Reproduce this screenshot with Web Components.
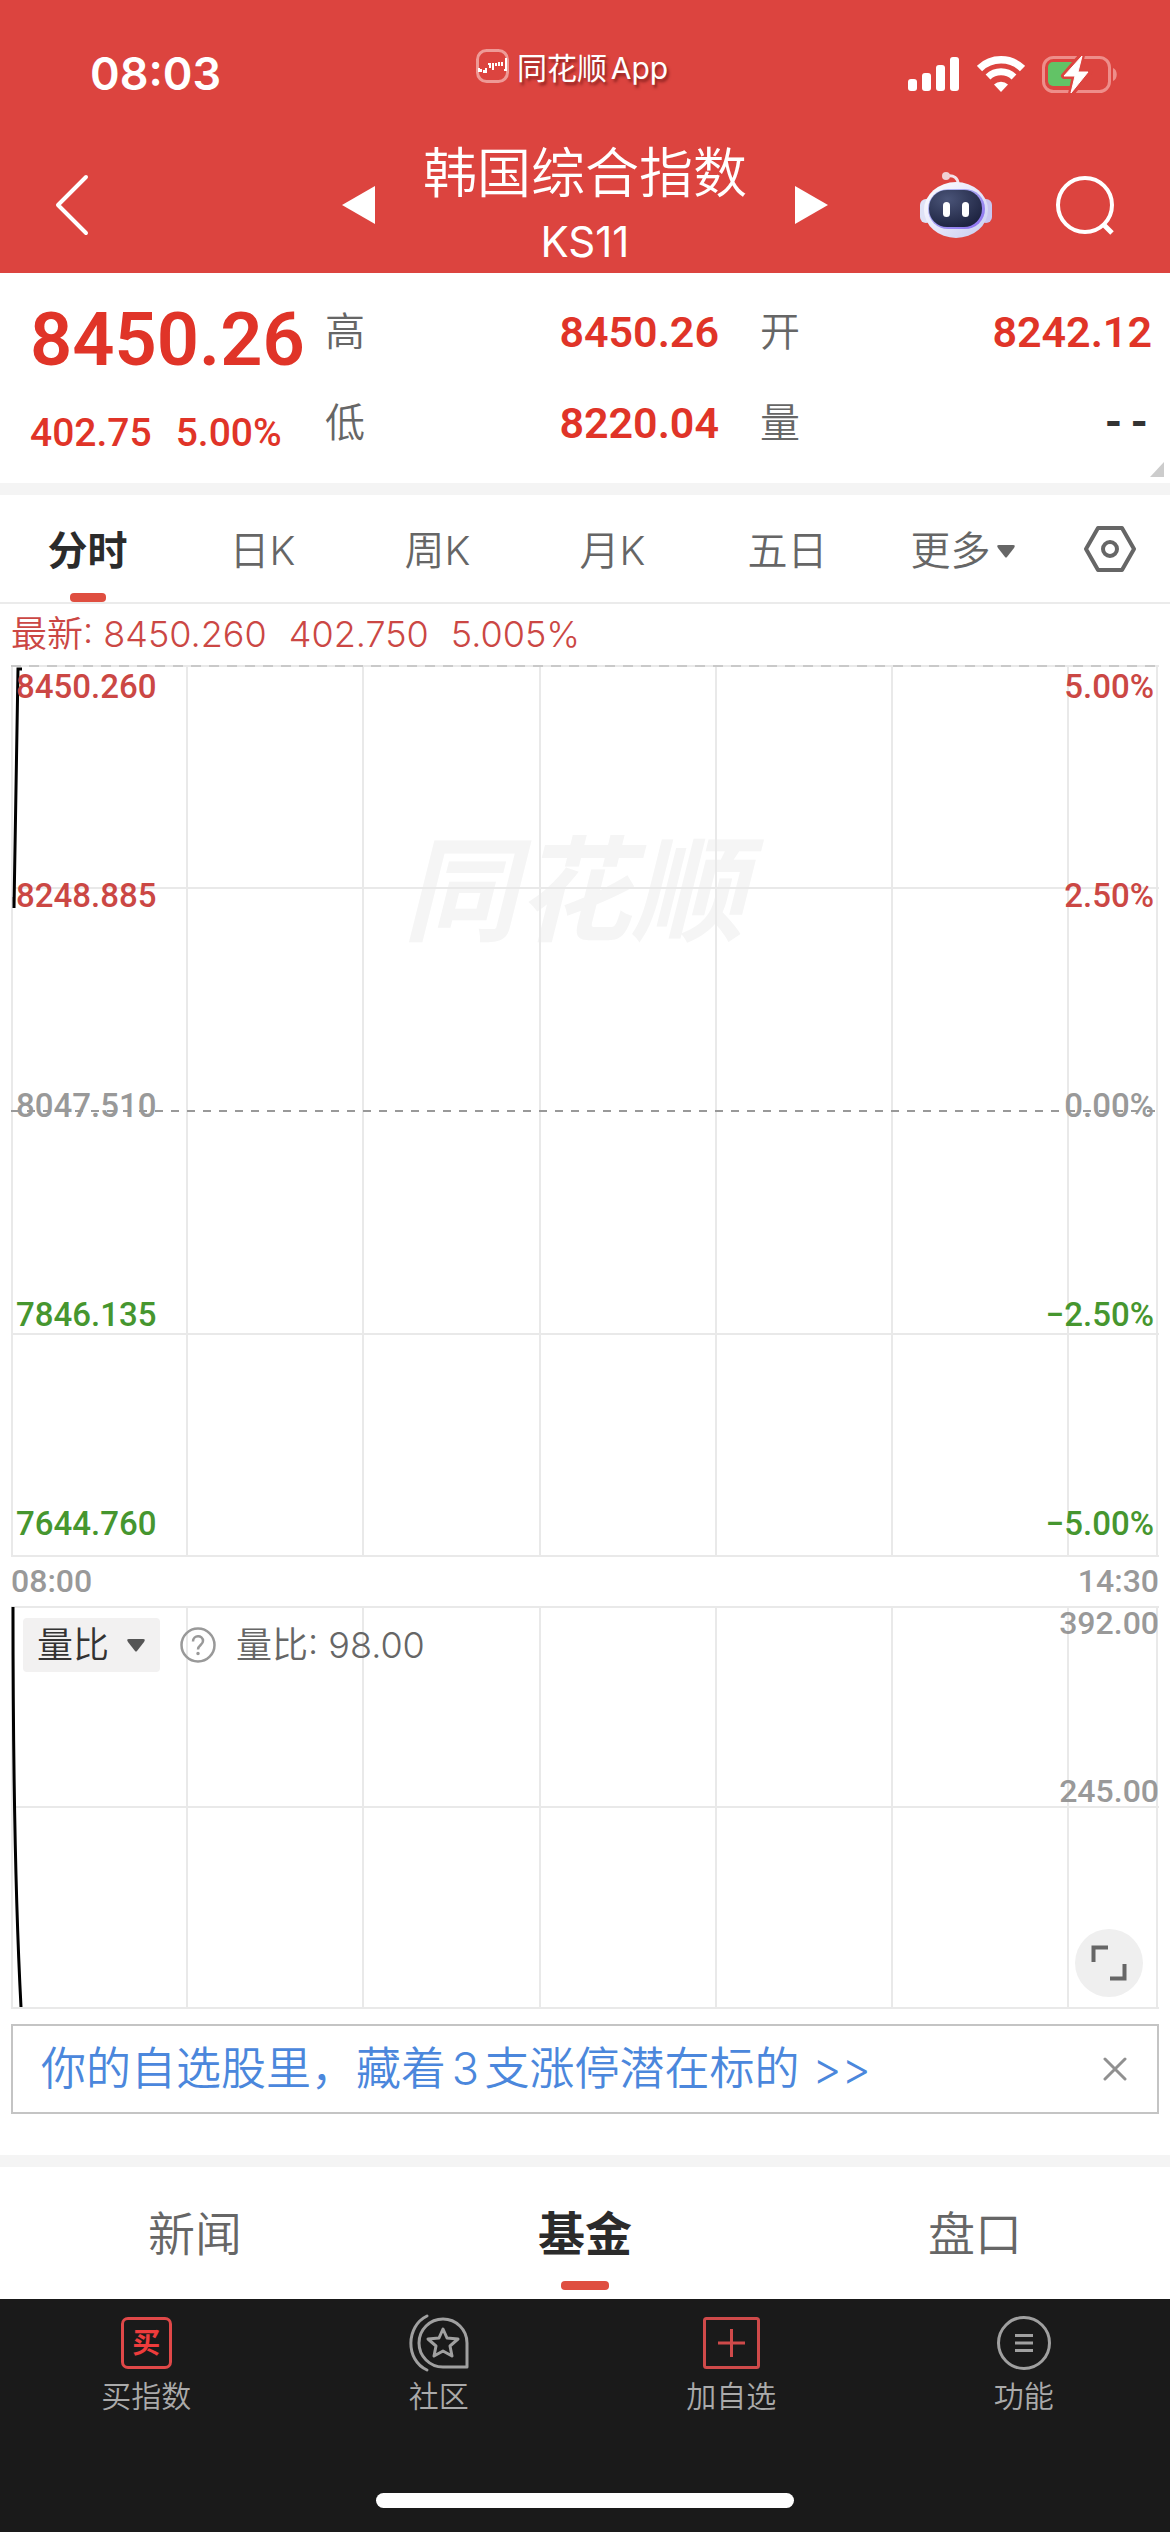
<!DOCTYPE html>
<html lang="zh-CN">
<head>
<meta charset="utf-8">
<meta name="viewport" content="width=device-width, initial-scale=1">
<title>韩国综合指数 KS11</title>
<style>
  html, body { margin: 0; }
  body {
    background: #fff;
    font-family: Inter, "Noto Sans CJK SC", sans-serif;
    color: #666;
    --num: Roboto, "Noto Sans CJK SC", sans-serif;
    --brand: #dc443f;
    --up: #e03428;
    --up-soft: #cb4744;
    --down: #46962f;
    --muted: #999;
    --accent: #df4e40;
    --grid: #e9e9e9;
  }
</style>
</head>
<body>
<quote-app></quote-app>

<script>
const base = `<style>
  *, *::before, *::after { box-sizing: border-box; }
  button, select { font: inherit; color: inherit; background: none; border: 0; padding: 0; margin: 0; cursor: pointer; }
  svg { display: block; flex: none; }
</style>`;

function define(name, html) {
  const template = document.createElement('template');
  template.innerHTML = base + html;
  customElements.define(name, class extends HTMLElement {
    constructor() {
      super();
      this.attachShadow({ mode: 'open' }).append(template.content.cloneNode(true));
    }
  });
}

/* ---------- phone status bar ---------- */
define('status-bar', `<style>
  :host { display: grid; grid-template-columns: 386px 1fr auto; height: 110px; padding: 38px 52px 0 90px; color: #fff; }
  .clock { font-size: 45px; line-height: 72px; font-weight: 600; }
  .app { display: flex; align-items: center; gap: 8px; height: 56px; font-size: 30px; text-shadow: 2px 3px 3px rgba(60,0,0,.5); text-autospace: normal; }
  .icons { display: flex; align-items: center; gap: 17px; height: 72px; }
</style>
<div class="clock">08:03</div>
<div class="app">
  <svg width="33" height="34" viewBox="0 0 33 34" fill="none">
    <rect x="1.500" y="1.500" width="30" height="31" rx="9" stroke="#ee9a96" stroke-width="3"/>
    <path d="M3 19v4M5 20v3M8 21v2h2v-4M12 15h2v4M17 14v7M20 14v3M23 17v-4M26 13v4M30 9v12h-2" stroke="#fff" stroke-width="2"/>
  </svg>
  <span>同花顺App</span>
</div>
<div class="icons">
  <svg width="52" height="36" viewBox="0 0 52 36" fill="#fff">
    <rect x="0" y="23" width="9" height="12" rx="3"/><rect x="14" y="17" width="9" height="18" rx="3"/>
    <rect x="28" y="9" width="9" height="26" rx="3"/><rect x="42" y="1" width="9" height="34" rx="3"/>
  </svg>
  <svg width="48" height="36" viewBox="0 0 48 36" fill="none" stroke="#fff">
    <path d="M2.500 12.500a31 31 0 0 1 43 0" stroke-width="7.500"/>
    <path d="M11 21a19 19 0 0 1 26 0" stroke-width="7"/>
    <path d="M24 36l-7-7.500a10 10 0 0 1 14 0z" fill="#fff" stroke="none"/>
  </svg>
  <svg width="76" height="42" viewBox="0 0 76 42" fill="none">
    <rect x="1.500" y="4.500" width="66" height="34" rx="10" stroke="#ee8e8a" stroke-width="3"/>
    <path d="M71 15c5 2 5 11 0 13z" fill="#ee8e8a"/>
    <path d="M11 9h20v24H11a5 5 0 0 1-5-5V14a5 5 0 0 1 5-5z" fill="#62c366"/>
    <path d="M40 2L22 23h11l-4 18 18-22H36z" fill="#fff" stroke="#dc443f" stroke-width="6" stroke-linejoin="round"/>
    <path d="M40 3L22 23h11l-4 17 17-21H36z" fill="#fff" stroke="#fff" stroke-width="1" stroke-linejoin="round"/>
  </svg>
</div>`);

/* ---------- title bar ---------- */
define('title-bar', `<style>
  :host { display: grid; grid-template-columns: 1fr auto 1fr; align-items: center; padding: 27px 55px 0; color: #fff; }
  .pager { display: flex; align-items: center; gap: 48px; }
  .tools { display: flex; align-items: center; justify-content: flex-end; gap: 62px; }
  .name { text-align: center; }
  h1 { margin: 0; font-size: 54px; line-height: 74px; font-weight: 350; }
  p { margin: 0; font-size: 42px; line-height: 62px; }
</style>
<button aria-label="返回"><svg width="34" height="62" viewBox="0 0 34 62" fill="none" stroke="#fff" stroke-width="4" stroke-linecap="round" stroke-linejoin="round"><path d="M31 3L3 31l28 28"/></svg></button>
<div class="pager">
  <button aria-label="上一个"><svg width="33" height="38" viewBox="0 0 33 38" fill="#fff"><path d="M33 0v38L0 19z"/></svg></button>
  <div class="name"><h1>韩国综合指数</h1><p>KS11</p></div>
  <button aria-label="下一个"><svg width="33" height="38" viewBox="0 0 33 38" fill="#fff"><path d="M0 0v38l33-19z"/></svg></button>
</div>
<div class="tools">
  <button aria-label="智能助手">
    <svg width="72" height="68" viewBox="0 0 72 68">
      <defs>
        <linearGradient id="shell" x1="0" y1="0" x2="1" y2="1"><stop offset="0" stop-color="#fff"/><stop offset=".55" stop-color="#e4e4fa"/><stop offset="1" stop-color="#c5cbee"/></linearGradient>
        <linearGradient id="rim" x1="0" y1="0" x2="1" y2="1"><stop offset="0" stop-color="#b9c6f2"/><stop offset="1" stop-color="#8a6cf0"/></linearGradient>
        <radialGradient id="face" cx=".35" cy=".25" r=".8"><stop offset="0" stop-color="#4a5478"/><stop offset="1" stop-color="#1d2340"/></radialGradient>
      </defs>
      <path d="M27 5c7-1 11 2 11 8" fill="none" stroke="#f3e3ea" stroke-width="3"/>
      <circle cx="26" cy="5" r="4" fill="#f0cfd4"/>
      <rect x="0" y="28" width="12" height="24" rx="6" fill="#dfe2f6"/><rect x="60" y="28" width="12" height="24" rx="6" fill="#c9c6f0"/>
      <ellipse cx="36" cy="39" rx="32" ry="28" fill="url(#shell)"/>
      <rect x="8" y="18" width="57" height="40" rx="20" fill="url(#rim)"/>
      <rect x="9" y="19" width="53" height="37" rx="18" fill="url(#face)"/>
      <rect x="23" y="31" width="7" height="15" rx="3.500" fill="#fff"/><rect x="42" y="31" width="7" height="15" rx="3.500" fill="#fff"/>
    </svg>
  </button>
  <button aria-label="搜索"><svg width="61" height="62" viewBox="0 0 61 62" fill="none" stroke="#fff" stroke-width="4"><circle cx="31" cy="31" r="27"/><path d="M49 50l9 9" stroke-width="5"/></svg></button>
</div>`);

/* ---------- price summary ---------- */
define('price-summary', `<style>
  :host { display: grid; grid-template-columns: 295px 394fr 433fr; padding: 14px 18px 14px 30px; height: 210px; font-family: var(--num); color: var(--up); position: relative; }
  .last { font-size: 74px; line-height: 106px; font-weight: 600; }
  .change { display: flex; gap: 24px; font-size: 39px; line-height: 80px; font-weight: 500; }
  dl { margin: 0; }
  dl + dl { padding-left: 41px; }
  dl div { display: flex; justify-content: space-between; line-height: 91px; }
  dt { font-size: 40px; font-weight: 350; color: #666; }
  dd { margin: 0; font-size: 43px; font-weight: 600; }
  .none { font-family: "Liberation Mono", monospace; font-weight: 700; color: #333; }
  .more { position: absolute; right: 6px; bottom: 6px; }
</style>
<div><div class="last">8450.26</div><div class="change"><span>402.75</span><span>5.00%</span></div></div>
<dl><div><dt>高</dt><dd>8450.26</dd></div><div><dt>低</dt><dd>8220.04</dd></div></dl>
<dl><div><dt>开</dt><dd>8242.12</dd></div><div><dt>量</dt><dd class="none">--</dd></div></dl>
<svg class="more" width="14" height="15" viewBox="0 0 14 15" fill="#ccc"><path d="M14 0v15H0z"/></svg>`);

/* ---------- one tab: <tab-item current> ---------- */
define('tab-item', `<style>
  :host { display: flex; flex: 1; }
  button { flex: 1; display: flex; flex-direction: column; align-items: center; font-weight: 350; color: #666; }
  .text { display: flex; align-items: center; gap: 6px; line-height: var(--tab-line); padding-top: var(--tab-top); white-space: nowrap; }
  .mark { width: var(--mark); height: 9px; border-radius: 4px; margin-top: auto; margin-bottom: var(--mark-gap); }
  :host([current]) button { color: #2b2b2b; font-weight: 600; }
  :host([current]) .mark { background: var(--accent); }
</style>
<button role="tab"><span class="text"><slot></slot></span><span class="mark"></span></button>`);

define('period-tabs', `<style>
  :host { display: flex; height: 109px; border-bottom: 2px solid #ebebeb; font-size: 40px; --tab-line: 60px; --tab-top: 26px; --mark: 36px; --mark-gap: 0px; }
  .list { display: flex; flex: 1; }
  .set { width: 120px; display: flex; align-items: center; padding-left: 34px; }
</style>
<div class="list" role="tablist">
  <tab-item current>分时</tab-item><tab-item>日K</tab-item><tab-item>周K</tab-item><tab-item>月K</tab-item><tab-item>五日</tab-item>
  <tab-item>更多<svg width="18" height="13" viewBox="0 0 18 13" fill="#666"><path d="M2 0h14q3 0 1 3l-7 9q-1 1-2 0L1 3Q-1 0 2 0z"/></svg></tab-item>
</div>
<button class="set" aria-label="设置"><svg width="52" height="46" viewBox="0 0 52 46" fill="none" stroke="#666" stroke-width="4" stroke-linejoin="round"><path d="M14 2h24l12 21-12 21H14L2 23z"/><circle cx="26" cy="23" r="7"/></svg></button>`);

/* ---------- intraday chart ---------- */
define('price-chart', `<style>
  :host { display: block; padding: 0 11px; font-family: var(--num); font-size: 33px; font-weight: 500; }
  .latest { display: flex; gap: 22px; font-family: Inter, "Noto Sans CJK SC", sans-serif; font-size: 36px; font-weight: 350; line-height: 61px; color: var(--up-soft); }
  .plot { display: grid; height: 892px; }
  .plot > * { grid-area: 1 / 1; min-width: 0; min-height: 0; }
  .plot svg { width: 100%; height: 100%; }
  .grid line { stroke: var(--grid); stroke-width: 2; }
  .grid .dash { stroke: #999; stroke-dasharray: 8 8; }
  .grid .limit { stroke: #c9c9c9; stroke-dasharray: 10 8; }
  .logo { place-self: center; padding-bottom: 456px; padding-right: 22px; font: italic 700 114px/120px "Noto Sans CJK SC", sans-serif; color: #f5f5f5; height: 892px; display: flex; align-items: center; }
  .axes { display: flex; justify-content: space-between; padding: 0 5px 11px; }
  .axes div { display: flex; flex-direction: column; justify-content: space-between; line-height: 44px; }
  .axes div + div { text-align: right; }
  .up { color: var(--up-soft); } .flat { color: var(--muted); } .down { color: var(--down); }
  .time { display: flex; justify-content: space-between; font-size: 32px; line-height: 48px; height: 49px; color: var(--muted); }
</style>
<div class="latest"><span>最新: 8450.260</span><span>402.750</span><span>5.005%</span></div>
<div class="plot">
  <div class="logo">同花顺</div>
  <svg class="grid" viewBox="0 0 1148 892" preserveAspectRatio="none">
    <line x1="1" y1="0" x2="1" y2="892"/><line x1="176" y1="0" x2="176" y2="892"/><line x1="352" y1="0" x2="352" y2="892"/><line x1="529" y1="0" x2="529" y2="892"/>
    <line x1="705" y1="0" x2="705" y2="892"/><line x1="881" y1="0" x2="881" y2="892"/><line x1="1057" y1="0" x2="1057" y2="892"/><line x1="1146" y1="0" x2="1146" y2="892"/>
    <line x1="0" y1="223" x2="1148" y2="223"/><line x1="0" y1="669" x2="1148" y2="669"/><line x1="0" y1="891" x2="1148" y2="891"/>
    <line x1="0" y1="1" x2="1148" y2="1"/><line class="limit" x1="0" y1="1" x2="1148" y2="1"/><line class="dash" x1="0" y1="446" x2="1148" y2="446"/>
    <path d="M11 4H7L3 243V232" fill="none" stroke="#000" stroke-width="3"/>
  </svg>
  <div class="axes">
    <div><span class="up">8450.260</span><span class="up">8248.885</span><span class="flat">8047.510</span><span class="down">7846.135</span><span class="down">7644.760</span></div>
    <div><span class="up">5.00%</span><span class="up">2.50%</span><span class="flat">0.00%</span><span class="down">−2.50%</span><span class="down">−5.00%</span></div>
  </div>
</div>
<div class="time"><span>08:00</span><span>14:30</span></div>`);

/* ---------- volume-ratio chart ---------- */
define('ratio-chart', `<style>
  :host { display: grid; height: 403px; margin: 0 11px; }
  :host > * { grid-area: 1 / 1; min-width: 0; min-height: 0; }
  .grid { width: 100%; height: 100%; }
  .grid line { stroke: var(--grid); stroke-width: 2; }
  .axis { display: flex; flex-direction: column; justify-content: space-between; height: 202px; text-align: right; font: 500 32px/34px var(--num); color: var(--muted); }
  .head { display: flex; align-items: center; gap: 20px; height: 54px; margin: 12px 0 0 12px; font-size: 36px; line-height: 54px; font-weight: 350; justify-self: start; }
  .pick { display: grid; align-items: center; background: #f2f1f1; border-radius: 4px; color: #333; }
  .pick > * { grid-area: 1 / 1; }
  select { appearance: none; width: 137px; height: 54px; padding-left: 14px; }
  .pick svg { justify-self: end; margin-right: 15px; pointer-events: none; }
  .value { margin: 0; }
  .full { place-self: end; width: 68px; height: 68px; margin: 0 16px 12px 0; border-radius: 50%; background: #efefef; display: flex; align-items: center; justify-content: center; }
</style>
<svg class="grid" viewBox="0 0 1148 403" preserveAspectRatio="none">
  <line x1="1" y1="0" x2="1" y2="403"/><line x1="176" y1="0" x2="176" y2="403"/><line x1="352" y1="0" x2="352" y2="403"/><line x1="529" y1="0" x2="529" y2="403"/>
  <line x1="705" y1="0" x2="705" y2="403"/><line x1="881" y1="0" x2="881" y2="403"/><line x1="1057" y1="0" x2="1057" y2="403"/><line x1="1146" y1="0" x2="1146" y2="403"/>
  <line x1="0" y1="1" x2="1148" y2="1"/><line x1="0" y1="201" x2="1148" y2="201"/><line x1="0" y1="402" x2="1148" y2="402"/>
  <path d="M2 1Q2 250 10 401" fill="none" stroke="#000" stroke-width="3"/>
</svg>
<div class="axis"><span>392.00</span><span>245.00</span></div>
<div class="head">
  <label class="pick"><select aria-label="指标"><option>量比</option></select>
    <svg width="18" height="13" viewBox="0 0 18 13" fill="#555"><path d="M2 0h14q3 0 1 3l-7 9q-1 1-2 0L1 3Q-1 0 2 0z"/></svg></label>
  <button aria-label="说明"><svg width="36" height="36" viewBox="0 0 36 36" fill="none" stroke="#999" stroke-width="2.500"><circle cx="18" cy="18" r="16.500"/><path d="M13 14.500c0-7 10-7 10-.5 0 4-5 4-5 8.500"/><circle cx="18" cy="26.500" r="1" fill="#999" stroke-width="1.500"/></svg></button>
  <p class="value">量比: 98.00</p>
</div>
<button class="full" aria-label="全屏"><svg width="36" height="36" viewBox="0 0 36 36" fill="none" stroke="#666" stroke-width="4"><path d="M2.500 17V2.500H17M19 33.500h14.500V19"/></svg></button>`);

/* ---------- promo banner ---------- */
define('promo-banner', `<style>
  :host { display: flex; align-items: center; justify-content: space-between; height: 90px; margin: 15px 11px 41px; padding: 0 30px 0 28px; border: 2px solid #c4c4c4; }
  a { font-size: 45px; line-height: 60px; font-weight: 350; color: #4b87dc; text-decoration: none; text-autospace: normal; }
</style>
<a href="#"><slot></slot></a>
<button aria-label="关闭"><svg width="24" height="24" viewBox="0 0 24 24" fill="none" stroke="#909090" stroke-width="3" stroke-linecap="round"><path d="M2 2l20 20M22 2L2 22"/></svg></button>`);

define('section-tabs', `<style>
  :host { display: flex; height: 132px; font-size: 47px; --tab-line: 70px; --tab-top: 32px; --mark: 48px; --mark-gap: 9px; }
</style>
<tab-item>新闻</tab-item><tab-item current>基金</tab-item><tab-item>盘口</tab-item>`);

/* ---------- bottom toolbar ---------- */
define('tool-item', `<style>
  :host { display: flex; flex: 1; }
  button { flex: 1; display: flex; flex-direction: column; align-items: center; gap: 3px; color: #aaa; font-size: 30px; line-height: 42px; font-weight: 350; }
  .icon { height: 58px; display: flex; align-items: center; }
</style>
<button><span class="icon"><slot name="icon"></slot></span><slot></slot></button>`);

define('tool-bar', `<style>
  :host { flex: 1; display: flex; flex-direction: column; background: #1a1a1a; padding-top: 15px; }
  nav { display: flex; }
  .buy { width: 51px; height: 52px; border: 3px solid #e04848; border-radius: 7px; display: flex; align-items: center; justify-content: center; font-size: 28px; line-height: 30px; font-weight: 700; color: #ee3c3c; }
  .home { width: 418px; height: 15px; border-radius: 8px; background: #fff; margin: auto auto 24px; }
</style>
<nav>
  <tool-item><span slot="icon" class="buy">买</span>买指数</tool-item>
  <tool-item><svg slot="icon" width="60" height="58" viewBox="0 0 60 58" fill="none" stroke="#a0a0a0" stroke-width="3" stroke-linecap="round" stroke-linejoin="round">
    <path d="M18 2C-3 12-4 46 18 56"/><path d="M58 29A24 24 0 1 0 34 53H58z"/><path d="M34 15l4 9 11 1-8 7 2 10-9-5-9 5 2-10-8-7 11-1z"/></svg>社区</tool-item>
  <tool-item><svg slot="icon" width="57" height="52" viewBox="0 0 57 52" fill="none" stroke="#cf4a4a" stroke-width="3"><rect x="1.500" y="1.500" width="54" height="49" rx="2"/><path d="M28.500 12v28M15 26h27"/></svg>加自选</tool-item>
  <tool-item><svg slot="icon" width="54" height="54" viewBox="0 0 54 54" fill="none" stroke="#a0a0a0" stroke-width="3"><circle cx="27" cy="27" r="25.500"/><path d="M18 19.500h18M18 27h18M18 34.500h18"/></svg>功能</tool-item>
</nav>
<div class="home"></div>`);

define('quote-app', `<style>
  :host { display: flex; flex-direction: column; min-height: 100vh; }
  header { background: var(--brand); }
  hr { width: 100%; height: 12px; margin: 0; border: 0; background: #f4f4f4; }
</style>
<header><status-bar></status-bar><title-bar></title-bar></header>
<price-summary></price-summary>
<hr>
<period-tabs></period-tabs>
<price-chart></price-chart>
<ratio-chart></ratio-chart>
<promo-banner>你的自选股里，藏着3支涨停潜在标的 &gt;&gt;</promo-banner>
<hr>
<section-tabs></section-tabs>
<tool-bar></tool-bar>`);
</script>
</body>
</html>
